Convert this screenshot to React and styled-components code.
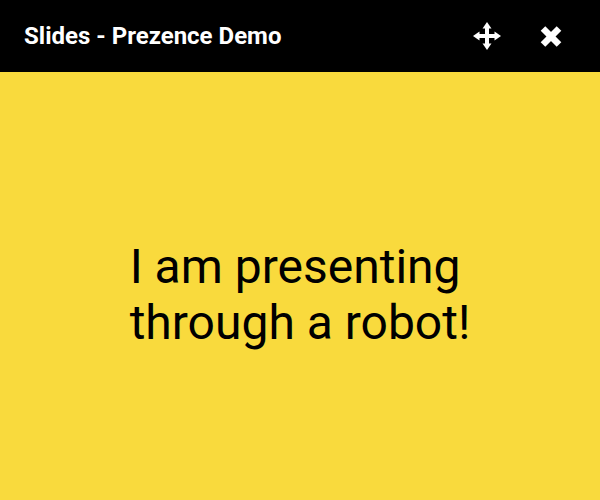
import React from "react";
import styled, { createGlobalStyle } from "styled-components";

const GlobalStyle = createGlobalStyle`
  * {
    margin: 0;
    padding: 0;
    box-sizing: border-box;
  }
  body {
    font-family: Roboto, "Liberation Sans", sans-serif;
    background: #f9da3d;
  }
`;

const Page = styled.div`
  width: 600px;
  height: 500px;
  display: flex;
  flex-direction: column;
  background: #f9da3d;
`;

const Header = styled.header`
  height: 72px;
  flex-shrink: 0;
  background: #000;
  display: flex;
  align-items: center;
  padding: 0 38px 0 24px;
`;

const Title = styled.h1`
  flex: 1;
  color: #fff;
  font-size: 24px;
  font-weight: 700;
`;

const IconButton = styled.button`
  background: none;
  border: none;
  color: #fff;
  display: flex;
  align-items: center;
  justify-content: center;
  margin-left: ${(p) => p.$gap}px;
`;

const Slide = styled.main`
  flex: 1;
  display: flex;
  align-items: center;
  justify-content: center;
  padding-top: 18px;
`;

const SlideText = styled.p`
  color: #000;
  font-size: 48px;
  line-height: 56px;
  font-weight: 400;
`;

function MoveIcon() {
  return (
    <svg width="28" height="28" viewBox="0 0 28 28" fill="currentColor">
      <rect x="12" y="5" width="4" height="18" />
      <rect x="5" y="12" width="18" height="4" />
      <polygon points="14,0 9.5,6.5 18.5,6.5" />
      <polygon points="14,28 9.5,21.5 18.5,21.5" />
      <polygon points="0,14 6.5,9.5 6.5,18.5" />
      <polygon points="28,14 21.5,9.5 21.5,18.5" />
    </svg>
  );
}

function CloseIcon() {
  return (
    <svg width="22" height="21" viewBox="0 0 22 21" stroke="currentColor">
      <line x1="3" y1="2.5" x2="19" y2="18.5" strokeWidth="6.5" />
      <line x1="19" y1="2.5" x2="3" y2="18.5" strokeWidth="6.5" />
    </svg>
  );
}

export default function App() {
  return (
    <Page>
      <GlobalStyle />
      <Header>
        <Title>Slides - Prezence Demo</Title>
        <IconButton $gap={0}>
          <MoveIcon />
        </IconButton>
        <IconButton $gap={39}>
          <CloseIcon />
        </IconButton>
      </Header>
      <Slide>
        <SlideText>
          I am presenting
          <br />
          through a robot!
        </SlideText>
      </Slide>
    </Page>
  );
}
